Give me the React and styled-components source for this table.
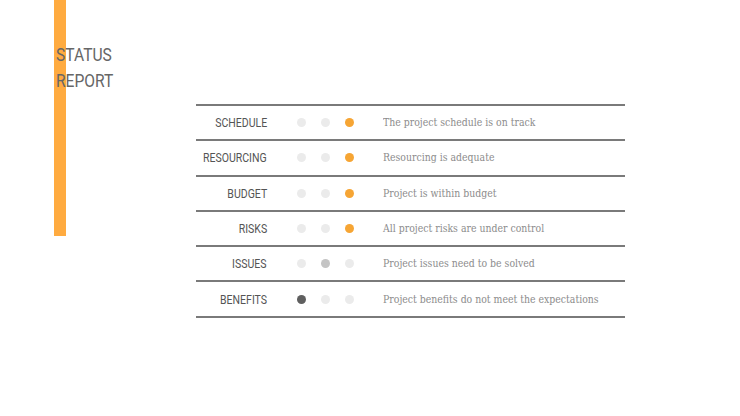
import React from "react";
import styled, { createGlobalStyle } from "styled-components";

const GlobalStyle = createGlobalStyle`
  html, body { margin: 0; padding: 0; background: #fff; }
  #root { width: 740px; height: 416px; overflow: hidden; }
`;

const rows = [
  { label: "SCHEDULE", dots: ["off", "off", "orange"], text: "The project schedule is on track" },
  { label: "RESOURCING", dots: ["off", "off", "orange"], text: "Resourcing is adequate" },
  { label: "BUDGET", dots: ["off", "off", "orange"], text: "Project is within budget" },
  { label: "RISKS", dots: ["off", "off", "orange"], text: "All project risks are under control" },
  { label: "ISSUES", dots: ["off", "mid", "off"], text: "Project issues need to be solved" },
  { label: "BENEFITS", dots: ["dark", "off", "off"], text: "Project benefits do not meet the expectations" },
];

const dotColors = {
  off: "#ebebeb",
  mid: "#c4c4c4",
  dark: "#5f5f5f",
  orange: "#f6a534",
};

const Slide = styled.div`
  width: 740px;
  height: 416px;
  display: grid;
  grid-template-columns: 196px 429px;
  background: #fff;
`;

const Side = styled.div`
  display: flex;
  align-items: flex-start;
  padding-left: 54px;
`;

const Accent = styled.div`
  width: 12px;
  height: 236px;
  background: #ffab40;
  flex-shrink: 0;
`;

const Title = styled.h1`
  margin: 42px 0 0 -10px;
  font-family: "Roboto", sans-serif;
  font-weight: 400;
  font-size: 19px;
  line-height: 26px;
  color: #666;
  transform: scaleX(0.82);
  transform-origin: left top;
`;

const Table = styled.div`
  margin-top: 104px;
  align-self: start;
  border-top: 2px solid #7a7a7a;
`;

const Row = styled.div`
  display: grid;
  grid-template-columns: 93px 24px 24px 24px 1fr;
  align-items: center;
  height: 33.3px;
  border-bottom: 2px solid #7a7a7a;
`;

const Label = styled.div`
  display: flex;
  justify-content: flex-end;
  padding-right: 22px;
  min-width: 0;
`;

const LabelText = styled.span`
  font-family: "Roboto", sans-serif;
  font-size: 13px;
  color: #545454;
  white-space: nowrap;
  transform: scaleX(0.81);
  transform-origin: right center;
`;

const DotCell = styled.div`
  display: flex;
  justify-content: center;
`;

const Dot = styled.span`
  width: 9px;
  height: 9px;
  border-radius: 50%;
  background: ${(p) => dotColors[p.$tone]};
`;

const Desc = styled.div`
  padding-left: 22px;
  font-family: "DejaVu Serif", "Liberation Serif", serif;
  font-size: 11px;
  color: #8c8c8c;
  white-space: nowrap;
  transform: scaleX(0.85);
  transform-origin: 22px center;
`;

export default function App() {
  return (
    <>
      <GlobalStyle />
      <Slide>
        <Side>
          <Accent />
          <Title>
            STATUS
            <br />
            REPORT
          </Title>
        </Side>
        <Table>
          {rows.map((r) => (
            <Row key={r.label}>
              <Label>
                <LabelText>{r.label}</LabelText>
              </Label>
              {r.dots.map((d, i) => (
                <DotCell key={i}>
                  <Dot $tone={d} />
                </DotCell>
              ))}
              <Desc>{r.text}</Desc>
            </Row>
          ))}
        </Table>
      </Slide>
    </>
  );
}
